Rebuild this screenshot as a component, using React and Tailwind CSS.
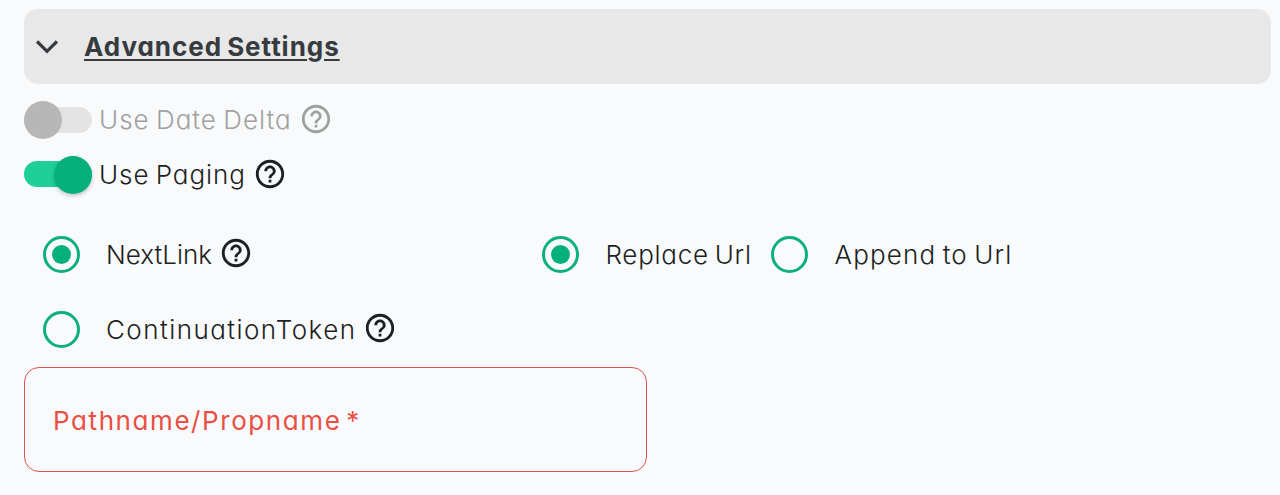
function HelpIcon({ raised }) {
  return (
    <svg
      viewBox="0 0 24 24"
      className={`size-[34px] shrink-0 ${raised ? "mb-[3px]" : "mb-px"}`}
      fill="currentColor"
    >
      <path d="M11 18h2v-2h-2v2zm1-16C6.48 2 2 6.48 2 12s4.48 10 10 10 10-4.48 10-10S17.52 2 12 2zm0 18c-4.41 0-8-3.59-8-8s3.59-8 8-8 8 3.59 8 8-3.59 8-8 8zm0-14c-2.21 0-4 1.79-4 4h2c0-1.1.9-2 2-2s2 .9 2 2c0 2-3 1.75-3 5h2c0-2.25 3-2.5 3-5 0-2.21-1.79-4-4-4z" />
    </svg>
  );
}

function Toggle({ on }) {
  return (
    <span className="relative flex h-[38px] w-[68px] shrink-0 items-center">
      <span className={`h-[26px] w-full rounded-full ${on ? "mb-px bg-[#1fcf98]" : "bg-[#e3e3e4]"}`} />
      <span
        className={`absolute top-0 size-[38px] rounded-full ${
          on ? "right-0 bg-[#05b07b] shadow-[0_2px_4px_rgba(0,0,0,0.22)]" : "left-0 bg-[#b7b7b7]"
        }`}
      />
    </span>
  );
}

function Radio({ checked }) {
  return (
    <span className="flex h-[37.5px] w-[37px] shrink-0 items-center justify-center rounded-full border-3 border-[#0bb07b]">
      {checked && <span className="size-[19px] rounded-full bg-[#05b07b]" />}
    </span>
  );
}

export default function App() {
  return (
    <main className="h-[495px] w-full overflow-hidden bg-[#f9fafc] pt-[9px] pr-[9px] pl-6 font-['Inter',sans-serif] text-[26px] leading-[36px] font-[330] whitespace-nowrap text-[#1d1f21] [font-feature-settings:'cv11'] [word-spacing:-2px]">
      <header className="flex h-[75px] items-center rounded-[14px] bg-[#e8e8e8] text-[#363b40]">
        <svg viewBox="0 0 22 14" className="ml-[12px] h-[14px] w-[22px]" fill="none" stroke="currentColor" strokeWidth="3.2">
          <path d="M1.1 1.5L11 11.3L20.900 1.5" />
        </svg>
        <h2 className="ml-[26px] font-bold tracking-[0.96px] underline decoration-2 underline-offset-[3px]">Advanced Settings</h2>
      </header>

      <div className="mt-2 flex h-[55px] items-center text-[#a0a1a1]">
        <Toggle />
        <span className="ml-[7px] w-[200px] tracking-[1px]">Use Date Delta</span>
        <HelpIcon />
      </div>
      <div className="flex h-[55px] items-center">
        <Toggle on />
        <span className="ml-[7px] w-[154px] tracking-[0.94px]">Use Paging</span>
        <HelpIcon />
      </div>

      <div className="mt-[15px] flex">
        <div className="w-[499px] pl-[19px]">
          <label className="flex h-[75px] items-center">
            <Radio checked />
            <span className="ml-[26px] w-[113px] tracking-[0px]">NextLink</span>
            <HelpIcon raised />
          </label>
          <label className="flex h-[75px] items-center">
            <Radio />
            <span className="ml-[26px] w-[256.5px] tracking-[1.44px]">ContinuationToken</span>
            <HelpIcon raised />
          </label>
        </div>
        <div className="flex h-[75px] items-center pl-[19px]">
          <label className="flex w-[229px] items-center">
            <Radio checked />
            <span className="ml-[26.5px] tracking-[0.72px]">Replace Url</span>
          </label>
          <label className="flex items-center">
            <Radio />
            <span className="ml-[26.5px] tracking-[1.14px]">Append to Url</span>
          </label>
        </div>
      </div>

      <div className="flex h-[105px] w-[623px] items-center rounded-[15px] border border-[#e0524b] pt-[3px] pl-[28px] font-[380] tracking-[1.58px] text-[#ea4f43] [word-spacing:-4px]">
        Pathname/Propname *
      </div>
    </main>
  );
}
